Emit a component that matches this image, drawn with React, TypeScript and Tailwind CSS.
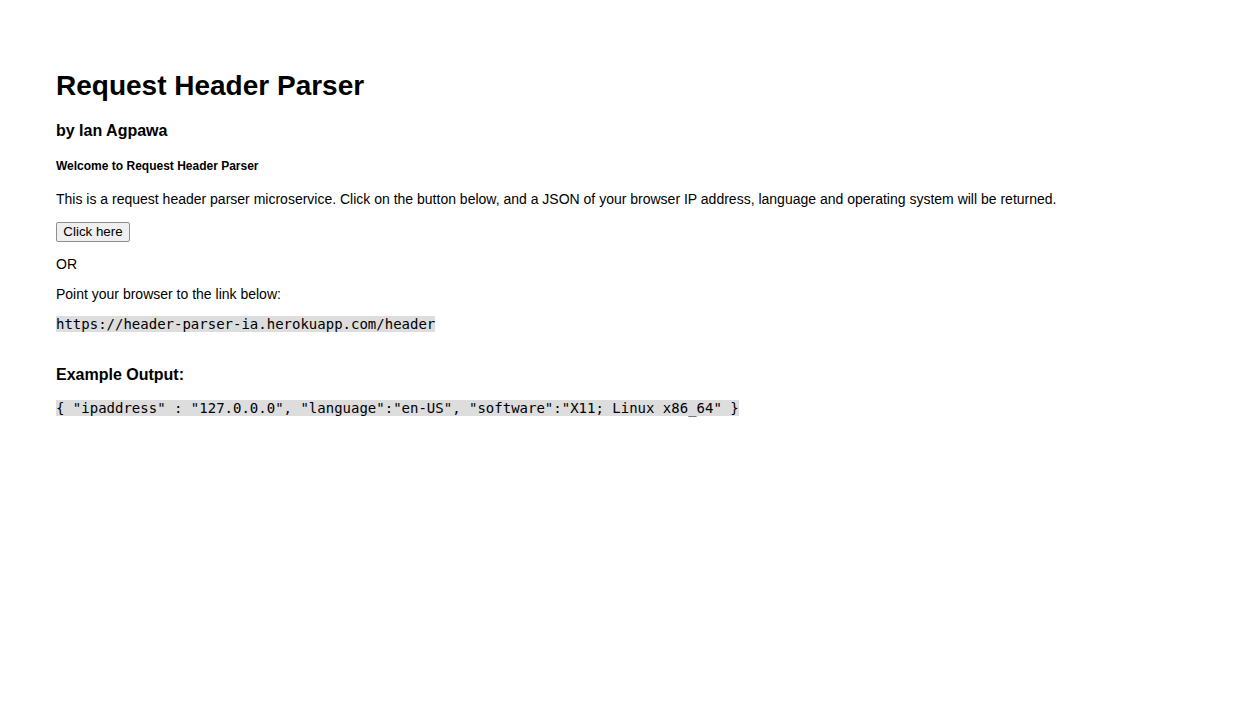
export default function App() {
  const sans = { fontFamily: '"Liberation Sans", Arial, sans-serif' };
  return (
    <div className="min-h-[716px] bg-white text-black px-[56px] pt-[70px]" style={sans}>
      <h1 className="text-[28px] font-bold leading-[32px]">Request Header Parser</h1>
      <h3 className="mt-[20px] text-[16px] font-bold leading-[18px]">by Ian Agpawa</h3>
      <h5 className="mt-[19px] text-[12px] font-bold leading-[14px]">Welcome to Request Header Parser</h5>
      <p className="mt-[18px] text-[14px] leading-[16px]">
        This is a request header parser microservice. Click on the button below, and a JSON of your browser IP address, language and operating system will be returned.
      </p>
      <div className="mt-[15px] flex">
        <button className="h-[20px] px-[6px] w-[74px] whitespace-nowrap text-[13.33px] leading-[16px] bg-[#efefef] border border-[#8f8f8f] rounded-[2px] text-black" style={sans}>
          Click here
        </button>
      </div>
      <p className="mt-[14px] text-[14px] leading-[16px]">OR</p>
      <p className="mt-[14px] text-[14px] leading-[16px]">Point your browser to the link below:</p>
      <div className="mt-[13px] leading-[17px]">
        <code className="bg-[#dddddd] text-[14px] leading-[17px]" style={{ fontFamily: '"DejaVu Sans Mono", monospace' }}>
          https://header-parser-ia.herokuapp.com/header
        </code>
      </div>
      <h3 className="mt-[33px] text-[16px] font-bold leading-[18px]">Example Output:</h3>
      <div className="mt-[15px] leading-[17px]">
        <code className="bg-[#dddddd] text-[14px] leading-[17px] whitespace-pre" style={{ fontFamily: '"DejaVu Sans Mono", monospace' }}>
          {'{ "ipaddress" : "127.0.0.0", "language":"en-US", "software":"X11; Linux x86_64" }'}
        </code>
      </div>
    </div>
  );
}
